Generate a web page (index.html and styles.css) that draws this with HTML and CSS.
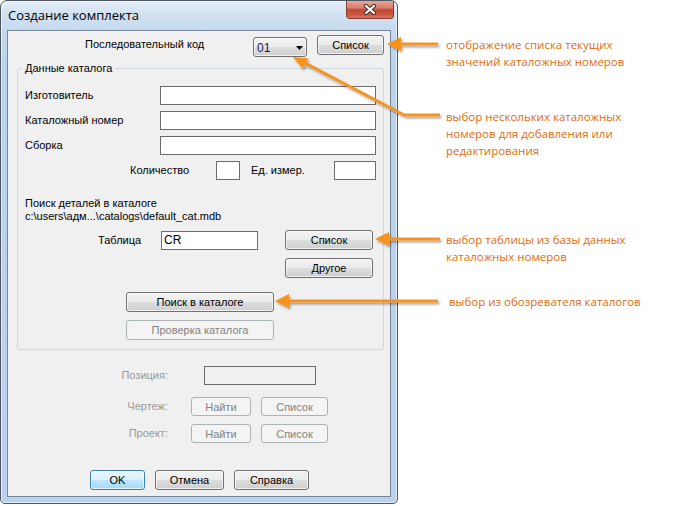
FILE: index.html
```html
<!DOCTYPE html>
<html lang="ru">
<head>
  <meta charset="UTF-8">
  <title>Создание комплекта</title>
  <link rel="stylesheet" href="styles.css">
</head>
<body>
  <div class="stage">
    <div class="window">
      <div class="titlebar">
        <span class="title">Создание комплекта</span>
        <div class="close">
          <svg width="14" height="11" viewBox="0 0 14 11">
            <path d="M3 2 L11 9 M11 2 L3 9" stroke="#4a2a26" stroke-width="4.2" stroke-linecap="round"/>
            <path d="M3 2 L11 9 M11 2 L3 9" stroke="#fff" stroke-width="2.2" stroke-linecap="round"/>
          </svg>
        </div>
      </div>

      <div class="client">
        <div class="row seq">
          <span class="seq-lbl">Последовательный код</span>
          <div class="combo">
            <span class="combo-val">01</span>
            <svg class="drop" width="7" height="4" viewBox="0 0 7 4"><path d="M0 0 H7 L3.5 4 Z" fill="#000"/></svg>
          </div>
          <button class="btn seq-btn">Список</button>
        </div>

        <fieldset class="group">
          <legend>Данные каталога</legend>
          <div class="row field first">
            <label class="f-lbl">Изготовитель</label>
            <input class="txt wide" type="text">
          </div>
          <div class="row field">
            <label class="f-lbl">Каталожный номер</label>
            <input class="txt wide" type="text">
          </div>
          <div class="row field">
            <label class="f-lbl">Сборка</label>
            <input class="txt wide" type="text">
          </div>
          <div class="row field">
            <label class="qty-lbl">Количество</label>
            <input class="txt qty-in" type="text">
            <label class="unit-lbl">Ед. измер.</label>
            <input class="txt unit-in" type="text">
          </div>

          <div class="search">
            <div>Поиск деталей в каталоге</div>
            <div>c:\users\адм...\catalogs\default_cat.mdb</div>
          </div>

          <div class="row table-row">
            <label class="tbl-lbl">Таблица</label>
            <input class="txt tbl-in" type="text" value="CR">
            <button class="btn tbl-btn">Список</button>
          </div>
          <button class="btn other-btn">Другое</button>
          <button class="btn browse-btn">Поиск в каталоге</button>
          <button class="btn browse-btn check" disabled>Проверка каталога</button>
        </fieldset>

        <div class="row pos-row">
          <span class="pos-lbl">Позиция:</span>
          <input class="txt pos-in" type="text" disabled>
        </div>
        <div class="row find-row">
          <span class="pos-lbl">Чертеж:</span>
          <button class="btn find-btn" disabled>Найти</button>
          <button class="btn list-btn" disabled>Список</button>
        </div>
        <div class="row find-row second">
          <span class="pos-lbl">Проект:</span>
          <button class="btn find-btn" disabled>Найти</button>
          <button class="btn list-btn" disabled>Список</button>
        </div>

        <div class="row footer">
          <button class="btn ok-btn">OK</button>
          <button class="btn cancel-btn">Отмена</button>
          <button class="btn help-btn">Справка</button>
        </div>
      </div>
    </div>

    <div class="notes">
      <p class="note n1">отображение списка текущих<br>значений каталожных номеров</p>
      <p class="note n2">выбор нескольких каталожных<br>номеров для добавления или<br>редактирования</p>
      <p class="note n3">выбор таблицы из базы данных<br>каталожных номеров</p>
      <p class="note n4">выбор из обозревателя каталогов</p>
    </div>

    <!-- callout arrows -->
    <svg class="arrows" width="680" height="506" viewBox="0 0 680 506">
      <defs>
        <filter id="sh" x="-20%" y="-20%" width="140%" height="140%">
          <feDropShadow dx="1.5" dy="2" stdDeviation="1.3" flood-color="#000" flood-opacity="0.35"/>
        </filter>
      </defs>
      <g fill="#f7931e" stroke="#f7931e" filter="url(#sh)">
        <path d="M438 44 H398" stroke-width="3" fill="none"/>
        <path d="M387 44 L401 37 L401 51 Z" stroke="none"/>

        <path d="M440 115 H404 L305 63" stroke-width="3" fill="none" stroke-linejoin="round"/>
        <path d="M293 57 L308.2 58.2 L302.6 68.8 Z" stroke="none"/>

        <path d="M440 239 H386" stroke-width="3" fill="none"/>
        <path d="M375 239 L389 232 L389 246 Z" stroke="none"/>

        <path d="M438 301 H286" stroke-width="3" fill="none"/>
        <path d="M275 301 L289 294 L289 308 Z" stroke="none"/>
      </g>
    </svg>
  </div>
</body>
</html>
```

FILE: styles.css
```css
/* General */
body {
  margin: 0;
  background: #fff;
  font-family: 'Liberation Sans', Arial, sans-serif;
  font-size: 11px;
  color: #000;
}

.stage {
  position: relative;
  width: 680px;
  height: 506px;
  display: flex;
  align-items: flex-start;
}

/* Window frame */
.window {
  width: 398px;
  height: 504px;
  box-sizing: border-box;
  border: 1px solid #4d5661;
  border-radius: 7px 7px 5px 5px;
  background: linear-gradient(to bottom, #e6eef8 0, #d3e2f3 12px, #c5d9ee 29px, #bcd3eb 60px, #b9d1ea 100%);
  box-shadow: inset 0 0 0 1px rgba(255, 255, 255, 0.6);
  display: flex;
  flex-direction: column;
}

.titlebar {
  height: 29px;
  display: flex;
  align-items: flex-start;
}

.title {
  padding-left: 7px;
  line-height: 28px;
  font-family: 'Open Sans', sans-serif;
  font-size: 13px;
  color: #000;
}

.close {
  margin-left: auto;
  margin-right: 3px;
  width: 48px;
  height: 18px;
  box-sizing: border-box;
  border: 1px solid #8a3a30;
  border-top: none;
  border-radius: 0 0 4px 4px;
  background: linear-gradient(to bottom, #e8a596 0, #d7806e 40%, #c24a36 52%, #c9573f 80%, #d77a61 100%);
  display: flex;
  align-items: center;
  justify-content: center;
}

.client {
  flex: 1;
  margin: 0 6px 6px 6px;
  border: 1px solid #76869a;
  background: #f0f0f0;
}

/* Rows */
.row {
  display: flex;
  align-items: center;
}

label, .seq-lbl, .pos-lbl {
  line-height: 13px;
}

/* Text boxes */
.txt {
  display: block;
  height: 19px;
  box-sizing: border-box;
  margin: 0;
  padding: 0 2px;
  border: 1px solid #6c6c6c;
  background: #fff;
  font: inherit;
  font-size: 12px;
  outline: none;
}

.txt:disabled {
  background: #f0f0f0;
}

/* Buttons */
.btn {
  display: block;
  height: 20px;
  box-sizing: border-box;
  margin: 0;
  padding: 0;
  border: 1px solid #707070;
  border-radius: 3px;
  background: linear-gradient(to bottom, #f2f2f2 0, #ebebeb 50%, #dddddd 51%, #cfcfcf 100%);
  box-shadow: inset 0 0 0 1px rgba(255, 255, 255, 0.7);
  font: inherit;
  color: #000;
}

.btn:disabled {
  border-color: #adb2b5;
  background: #f4f4f4;
  box-shadow: none;
  color: #838383;
}

/* Sequence row */
.seq {
  align-items: flex-start;
  margin-top: 3px;
  height: 22px;
}

.seq-lbl {
  margin-left: 77px;
  width: 168px;
  margin-top: 4px;
}

.combo {
  position: relative;
  width: 54px;
  height: 20px;
  margin-top: 3px;
  box-sizing: border-box;
  border: 1px solid #707070;
  border-radius: 3px;
  background: linear-gradient(to bottom, #f2f2f2 0, #ebebeb 50%, #dddddd 51%, #cfcfcf 100%);
  box-shadow: inset 0 0 0 1px rgba(255, 255, 255, 0.7);
}

.combo-val {
  position: absolute;
  left: 3px;
  top: 3px;
  font-size: 12px;
  color: #1b1464;
}

.drop {
  position: absolute;
  left: 42px;
  top: 8px;
}

.seq-btn {
  margin-left: 10px;
  margin-top: 1px;
  width: 67px;
}

/* Group box */
.group {
  margin: 6px 0 0 9px;
  width: 367px;
  box-sizing: border-box;
  padding: 0 0 9px 0;
  border: 1px solid #d0d7dd;
  border-radius: 3px;
}

.group legend {
  margin-left: 4px;
  padding: 0 3px;
  line-height: 13px;
}

.field {
  height: 19px;
  margin-top: 6px;
}

.field.first {
  margin-top: 11px;
}

.f-lbl {
  margin-left: 7px;
  width: 135px;
}

.wide {
  width: 216px;
}

.qty-lbl {
  margin-left: 112px;
  width: 86px;
}

.qty-in {
  width: 24px;
}

.unit-lbl {
  margin-left: 11px;
  width: 83px;
}

.unit-in {
  width: 42px;
}

.search {
  margin: 17px 0 0 7px;
  line-height: 13px;
}

.table-row {
  height: 20px;
  margin-top: 7px;
}

.tbl-lbl {
  margin-left: 80px;
  width: 63px;
}

.tbl-in {
  width: 97px;
}

.tbl-btn {
  margin-left: 27px;
  width: 88px;
}

.other-btn {
  margin: 8px 0 0 267px;
  width: 88px;
}

.browse-btn {
  margin: 14px 0 0 108px;
  width: 148px;
}

.browse-btn.check {
  margin-top: 8px;
}

/* Position / drawing / project */
.pos-lbl {
  width: 160px;
  text-align: right;
  color: #9a9a9a;
}

.pos-row {
  height: 19px;
  margin-top: 16px;
}

.pos-in {
  margin-left: 36px;
  width: 112px;
}

.find-row {
  height: 19px;
  margin-top: 12px;
}

.find-row.second {
  margin-top: 8px;
}

.find-row .btn {
  height: 19px;
}

.find-btn {
  margin-left: 23px;
  width: 60px;
}

.list-btn {
  margin-left: 10px;
  width: 67px;
}

/* Footer */
.footer {
  margin-top: 27px;
  height: 20px;
}

.ok-btn {
  margin-left: 82px;
  width: 55px;
  border-color: #3c7fb1;
  background: linear-gradient(to bottom, #eaf6fd 0, #d9f0fc 50%, #bee6fd 51%, #a7d9f5 100%);
}

.cancel-btn {
  margin-left: 10px;
  width: 69px;
}

.help-btn {
  margin-left: 10px;
  width: 75px;
}

/* Callout notes */
.notes {
  margin-left: 48px;
  display: flex;
  flex-direction: column;
  font-family: 'Open Sans', sans-serif;
  font-size: 11.5px;
  line-height: 17px;
  color: #e36c0a;
}

.note {
  margin: 0;
}

.n1 { margin-top: 36px; }
.n2 { margin-top: 38px; }
.n3 { margin-top: 72px; }
.n4 { margin-top: 28px; padding-left: 3px; }

.arrows {
  position: absolute;
  left: 0;
  top: 0;
  pointer-events: none;
}
```
